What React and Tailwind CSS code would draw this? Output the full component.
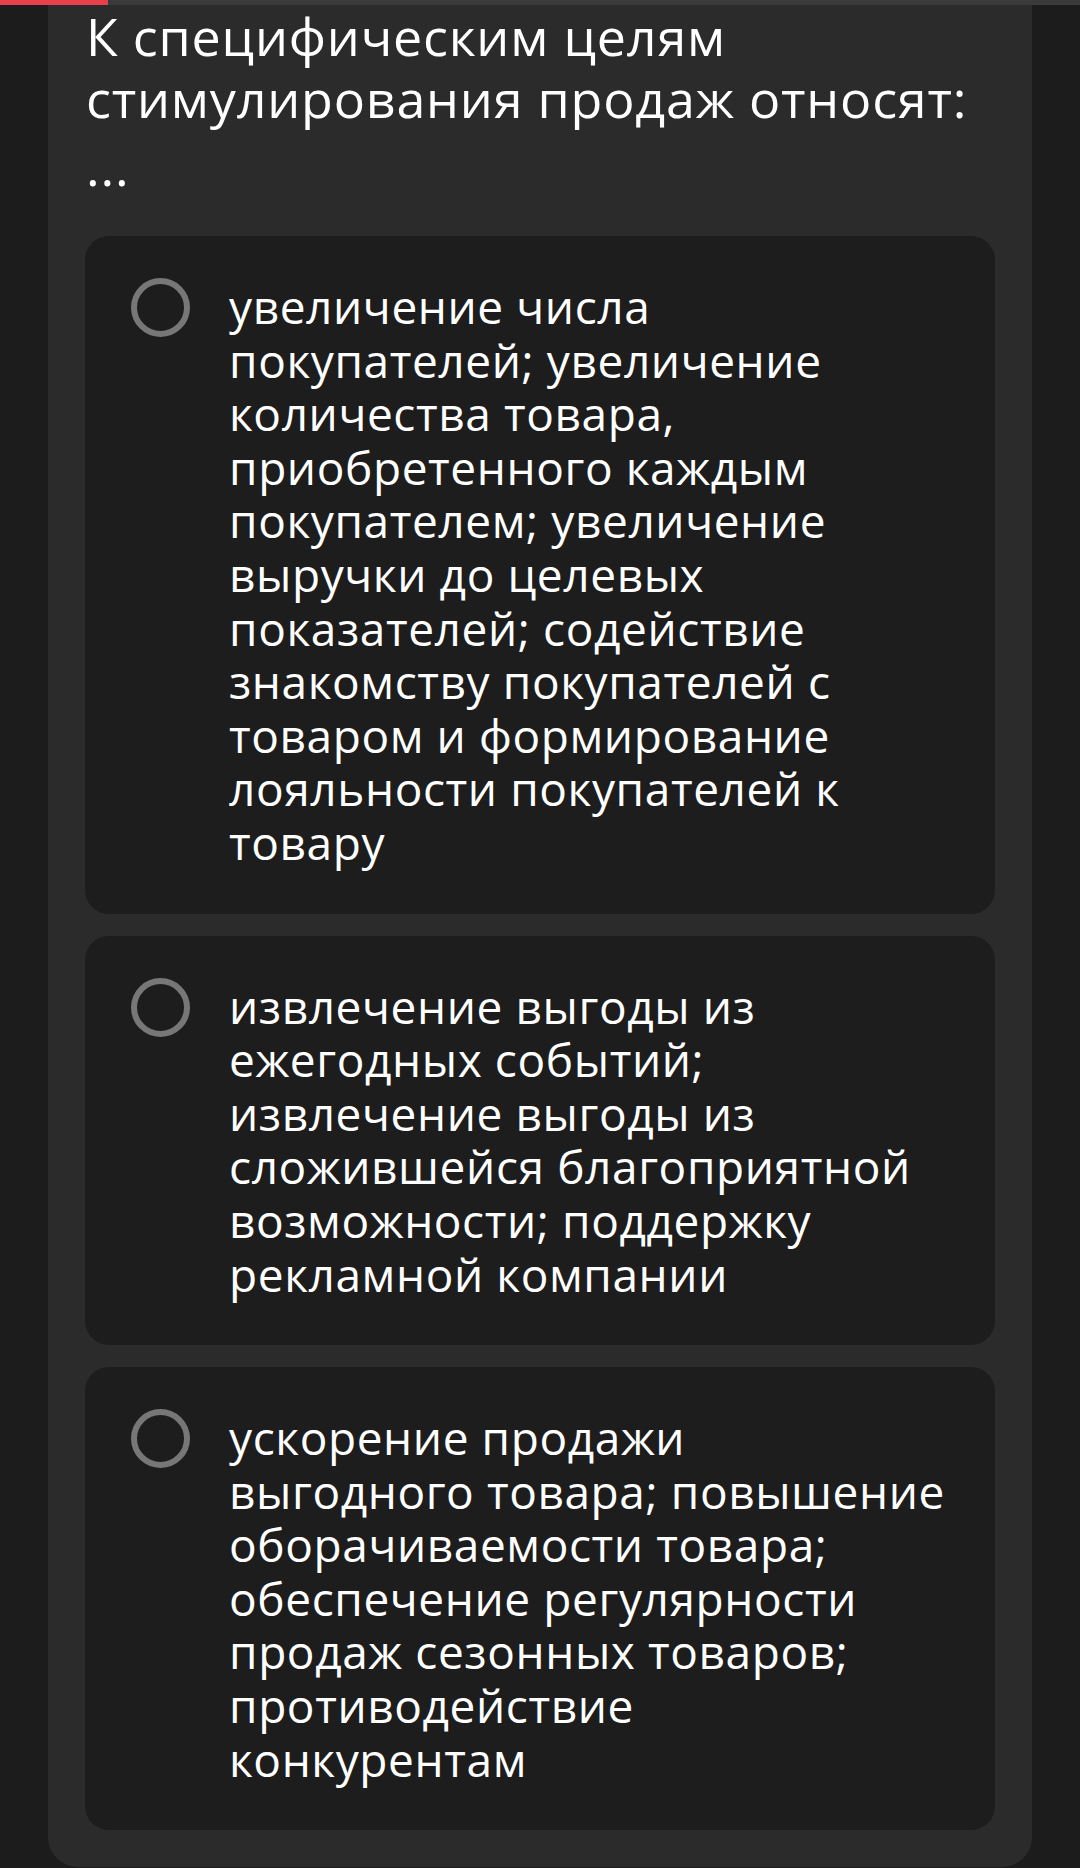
const question = ['К специфическим целям', 'стимулирования продаж относят:'];

const answers = [
  {
    id: 1,
    lines: [
      'увеличение числа',
      'покупателей; увеличение',
      'количества товара,',
      'приобретенного каждым',
      'покупателем; увеличение',
      'выручки до целевых',
      'показателей; содействие',
      'знакомству покупателей с',
      'товаром и формирование',
      'лояльности покупателей к',
      'товару',
    ],
  },
  {
    id: 2,
    lines: [
      'извлечение выгоды из',
      'ежегодных событий;',
      'извлечение выгоды из',
      'сложившейся благоприятной',
      'возможности; поддержку',
      'рекламной компании',
    ],
  },
  {
    id: 3,
    lines: [
      'ускорение продажи',
      'выгодного товара; повышение',
      'оборачиваемости товара;',
      'обеспечение регулярности',
      'продаж сезонных товаров;',
      'противодействие',
      'конкурентам',
    ],
  },
];

function AnswerOption({ lines }) {
  return (
    <label className="flex items-start rounded-[24px] bg-[#1d1d1d] pl-[46px] pr-6 py-[44px] cursor-pointer">
      <span className="mt-[-2px] h-[59px] w-[59px] shrink-0 rounded-full border-[6px] border-[#777777]" />
      <span className="ml-[39px] text-[46px] leading-[53.6px] tracking-[0.6px] text-white">
        {lines.map((line, i) => (
          <span key={i} className="block whitespace-nowrap">{line}</span>
        ))}
      </span>
    </label>
  );
}

export default function App() {
  return (
    <div
      className="min-h-[1868px] bg-[#1c1c1c]"
      style={{ fontFamily: '"Open Sans", "Noto Sans", sans-serif' }}
    >
      {/* test progress */}
      <div className="h-[5px] bg-[#3a3a3a]">
        <div className="h-full w-[108px] bg-[#e8414b]" />
      </div>

      <div className="mx-[48px] min-h-[1861px] rounded-b-[30px] bg-[#2b2b2b] px-[37px] pb-[37px]">
        <h1 className="pl-[1px] text-[52px] leading-[62px] tracking-[0.8px] font-normal text-white">
          {question.map((line, i) => (
            <span key={i} className="block whitespace-nowrap">{line}</span>
          ))}
          <span className="mt-[6px] block">...</span>
        </h1>

        <div className="mt-[39px] flex flex-col gap-[22px]">
          {answers.map((a) => (
            <AnswerOption key={a.id} lines={a.lines} />
          ))}
        </div>
      </div>
    </div>
  );
}
